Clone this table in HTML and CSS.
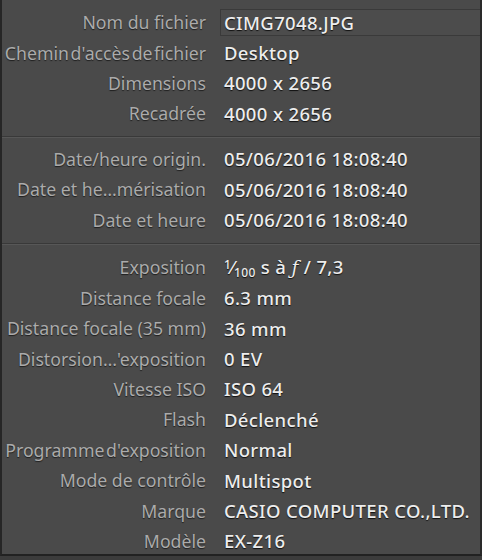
FILE: index.html
```html
<!DOCTYPE html>
<html lang="fr">
<head>
<meta charset="utf-8">
<title>Métadonnées</title>
<link rel="stylesheet" href="styles.css">
</head>
<body>
<div class="panel">
  <div class="section first">
    <div class="row"><span class="label">Nom du fichier</span><span class="value field">CIMG7048.JPG</span></div>
    <div class="row"><span class="label tight">Chemin d'accès de fichier</span><span class="value">Desktop</span></div>
    <div class="row"><span class="label">Dimensions</span><span class="value">4000 x 2656</span></div>
    <div class="row"><span class="label">Recadrée</span><span class="value">4000 x 2656</span></div>
  </div>
  <div class="section second">
    <div class="row"><span class="label">Date/heure origin.</span><span class="value">05/06/2016 18:08:40</span></div>
    <div class="row"><span class="label">Date et he…mérisation</span><span class="value">05/06/2016 18:08:40</span></div>
    <div class="row"><span class="label">Date et heure</span><span class="value">05/06/2016 18:08:40</span></div>
  </div>
  <div class="section third">
    <div class="row"><span class="label">Exposition</span><span class="value"><span class="sup">1</span>⁄<span class="sub">100</span> s à <i class="f">ƒ</i> / 7,3</span></div>
    <div class="row"><span class="label">Distance focale</span><span class="value">6.3 mm</span></div>
    <div class="row"><span class="label">Distance focale (35 mm)</span><span class="value">36 mm</span></div>
    <div class="row"><span class="label">Distorsion…'exposition</span><span class="value">0 EV</span></div>
    <div class="row"><span class="label">Vitesse ISO</span><span class="value">ISO 64</span></div>
    <div class="row"><span class="label">Flash</span><span class="value">Déclenché</span></div>
    <div class="row"><span class="label tight">Programme d'exposition</span><span class="value">Normal</span></div>
    <div class="row"><span class="label">Mode de contrôle</span><span class="value">Multispot</span></div>
    <div class="row"><span class="label">Marque</span><span class="value">CASIO COMPUTER CO.,LTD.</span></div>
    <div class="row"><span class="label">Modèle</span><span class="value">EX-Z16</span></div>
  </div>
</div>
</body>
</html>
```

FILE: styles.css
```css
html, body {
  margin: 0;
  padding: 0;
  background: #3c3c3c;
}

.panel {
  box-sizing: border-box;
  width: 482px;
  height: 556px;
  background: #4a4a4a;
  border-left: 2px solid #262626;
  border-right: 2px solid #2a2a2a;
  border-bottom: 2px solid #222222;
  overflow: hidden;
  font-family: "Noto Sans", "DejaVu Sans", sans-serif;
  font-size: 17.7px;
}

.section {
  display: flex;
  flex-direction: column;
}

.section.first {
  padding-top: 7px;
  padding-bottom: 7px;
  border-bottom: 1px solid #393939;
  box-shadow: 0 1px 0 #575757;
}

.section.second {
  padding-top: 7px;
  padding-bottom: 8px;
  border-bottom: 1px solid #393939;
  box-shadow: 0 1px 0 #575757;
}

.section.third {
  padding-top: 8.5px;
}

.row {
  display: grid;
  grid-template-columns: 204px 1fr;
  column-gap: 14px;
  align-items: center;
  height: 30.4px;
}

.label {
  text-align: right;
  color: #ababab;
  white-space: nowrap;
  text-shadow: 0 1px 1px rgba(0, 0, 0, 0.6);
}

.label.tight {
  word-spacing: -3px;
}

.value {
  color: #ededed;
  font-size: 18.5px;
  font-weight: 500;
  letter-spacing: 0.35px;
  white-space: nowrap;
  padding-left: 4px;
  text-shadow: 0 1px 1px rgba(0, 0, 0, 0.8);
}

.value.field {
  box-sizing: border-box;
  height: 27px;
  line-height: 25px;
  padding-left: 3px;
  border: 1px solid #3a3a3a;
  border-right: none;
  background: #4c4c4c;
}

.sup {
  font-size: 12px;
  vertical-align: 5px;
}

.sub {
  font-size: 12px;
  vertical-align: -3px;
}

.f {
  font-family: "DejaVu Serif", serif;
  font-style: italic;
}
```
